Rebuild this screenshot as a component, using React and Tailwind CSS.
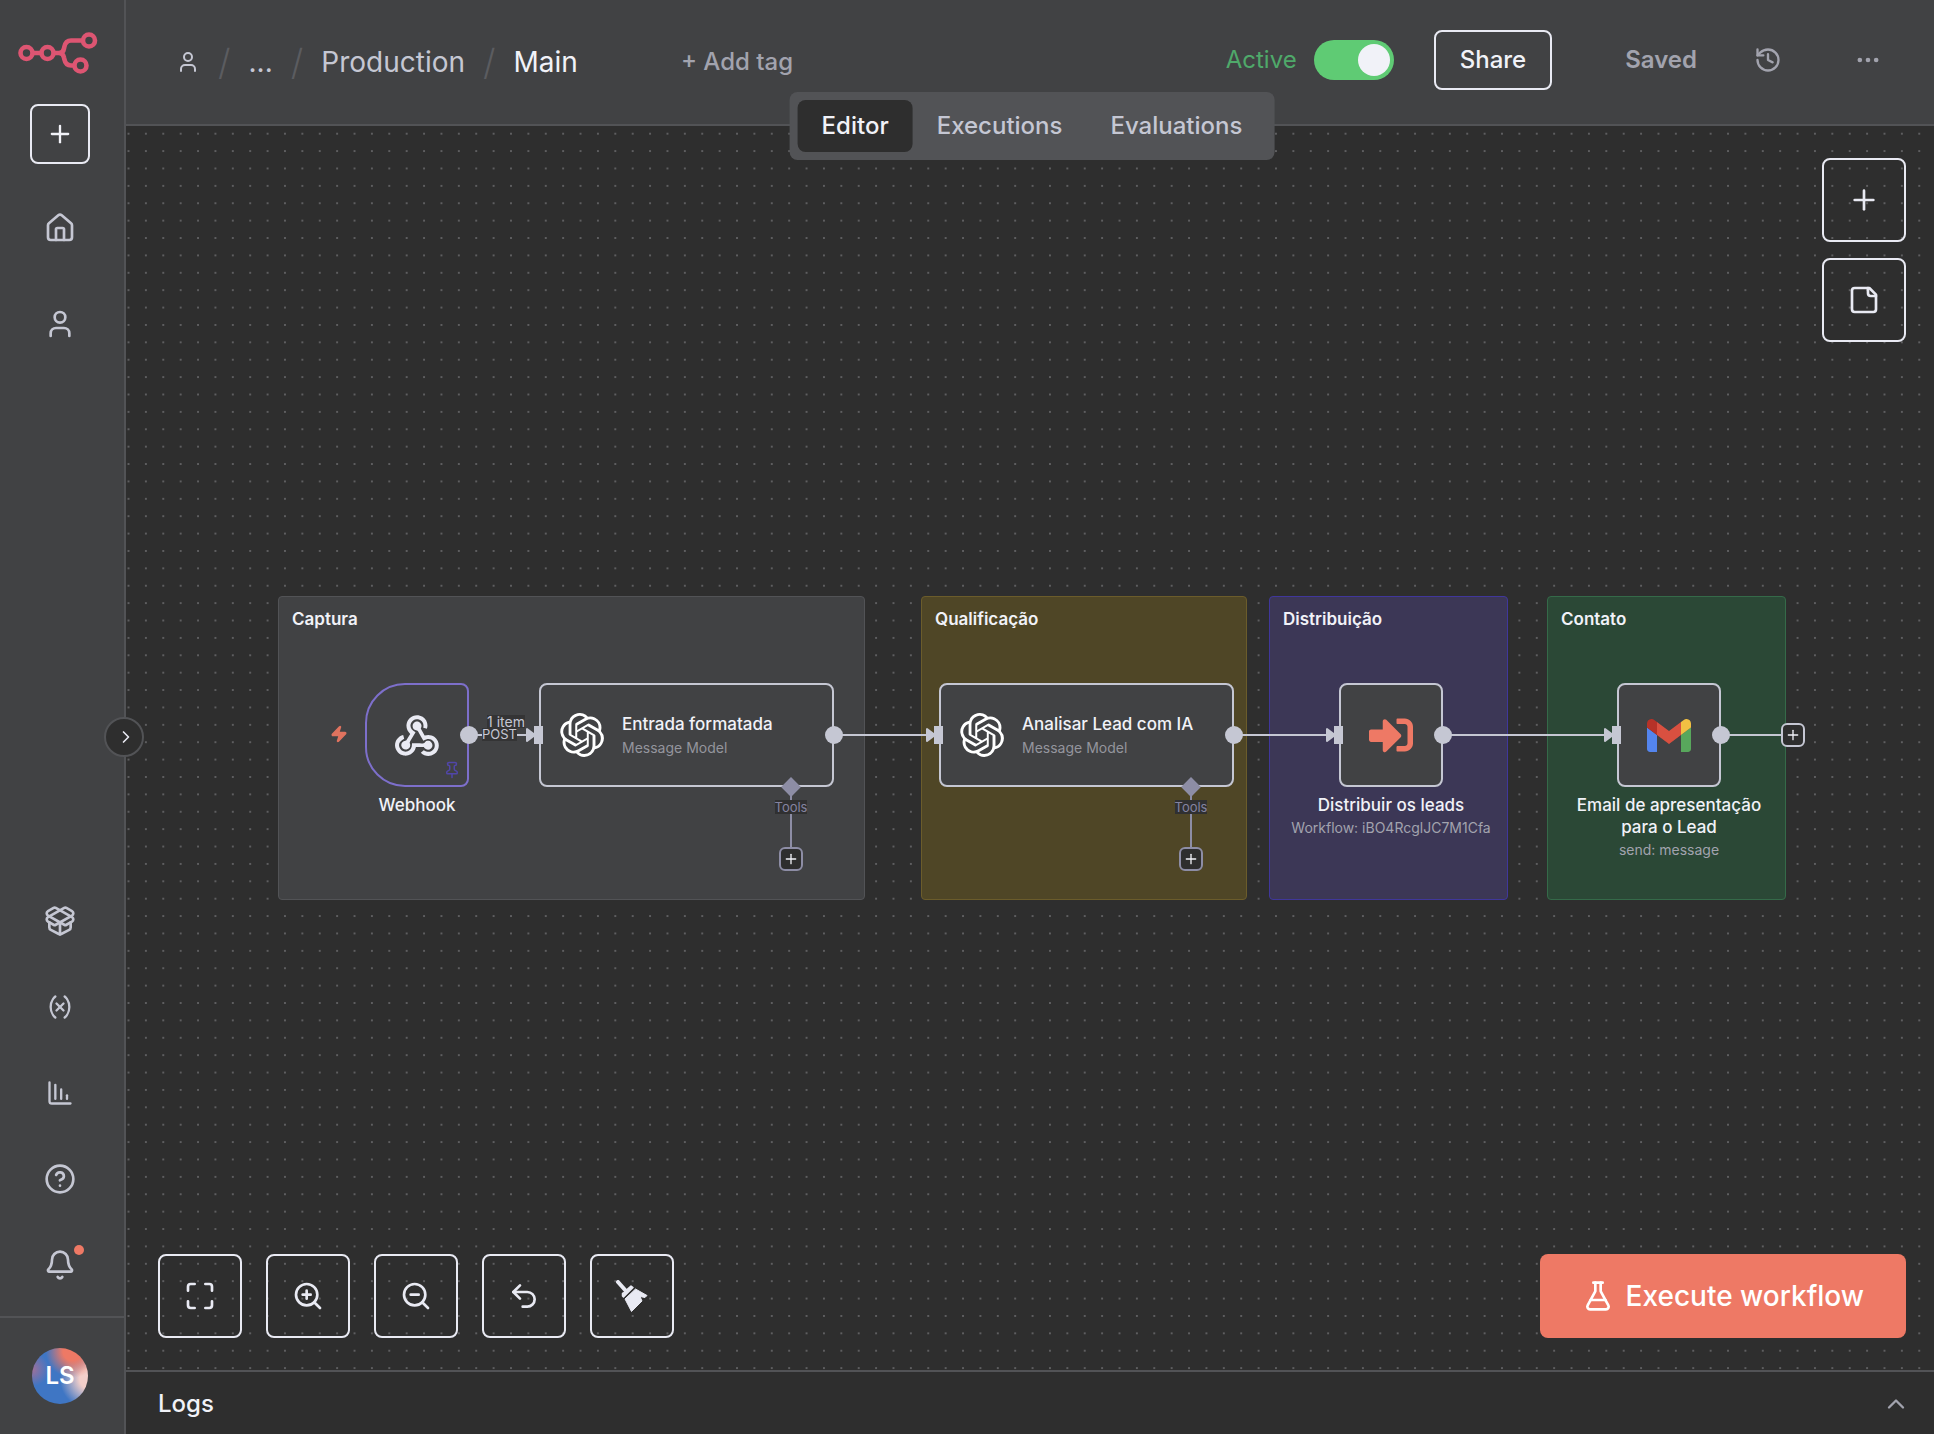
import { useState } from 'react'
import {
  Bell,
  ChartColumnDecreasing,
  ChevronRight,
  ChevronUp,
  CircleQuestionMark,
  Ellipsis,
  FlaskConical,
  History,
  House,
  Maximize,
  PackageOpen,
  Pin,
  Plus,
  Undo2,
  User,
  Variable,
  Zap,
  ZoomIn,
  ZoomOut,
} from 'lucide-react'
import { FaSignInAlt } from 'react-icons/fa'
import { SiOpenai } from 'react-icons/si'

const sidebarTop = [
  { label: 'Overview', icon: House },
  { label: 'Personal', icon: User },
]

const sidebarBottom = [
  { label: 'Templates', icon: PackageOpen, size: 32 },
  { label: 'Variables', icon: Variable, size: 28 },
  { label: 'Insights', icon: ChartColumnDecreasing, size: 28 },
  { label: 'Help', icon: CircleQuestionMark, size: 32 },
  { label: "What's new", icon: Bell, size: 32, dot: true },
]

const tabs = ['Editor', 'Executions', 'Evaluations']

// canvas coordinates, measured from the top left of the canvas
const stickies = [
  { title: 'Captura', className: 'left-[152px] w-[587px] border-[#525356] bg-[#414244]' },
  { title: 'Qualificação', className: 'left-[795px] w-[326px] border-[#6b5c2b] bg-[#4f4626]' },
  { title: 'Distribuição', className: 'left-[1143px] w-[239px] border-[#40379b] bg-[#3c3756]' },
  { title: 'Contato', className: 'left-[1421px] w-[239px] border-[#356a49] bg-[#2b4836]' },
]

const edges = [
  { from: 343, to: 408 },
  { from: 708, to: 808 },
  { from: 1108, to: 1208 },
  { from: 1317, to: 1486 },
]

function N8nLogo() {
  return (
    <svg width="80" height="42" viewBox="0 0 80 42" fill="none" stroke="#dd5572" strokeWidth="4.6" aria-hidden="true">
      <circle cx="8.5" cy="21" r="6" />
      <circle cx="29.5" cy="21" r="6" />
      <circle cx="71" cy="8.5" r="6" />
      <circle cx="62.5" cy="33.5" r="6" />
      <path d="M14.5 21h9M35.5 21H41c3 0 4.500-1.500 5-4.500l.3-1.500c.8-4 2.700-6.500 6.700-6.500h12M41 21c3 0 4.500 1.500 5 4.500l.3 1.500c.8 4 2.700 6.500 6.700 6.500h3.500" />
    </svg>
  )
}

function WebhookIcon() {
  return (
    <svg width="44" height="41" viewBox="0 0 256 239" fill="#e9eaf3" aria-hidden="true">
      <path d="M119.54 100.503c-10.61 17.836-20.775 35.108-31.152 52.25-2.665 4.401-3.984 7.986-1.855 13.58 5.878 15.454-2.414 30.493-17.998 34.575-14.697 3.851-29.016-5.808-31.932-21.543-2.584-13.927 8.224-27.58 23.58-29.757 1.286-.184 2.6-.205 4.762-.367l23.358-39.168C73.612 95.465 64.868 78.39 66.803 57.23c1.368-14.957 7.25-27.883 18-38.477 20.59-20.288 52.002-23.573 76.246-8.001 23.284 14.958 33.948 44.094 24.858 69.031-6.854-1.858-13.756-3.732-21.343-5.79 2.854-13.865.743-26.315-8.608-36.981-6.178-7.042-14.106-10.733-23.12-12.093-18.072-2.73-35.815 8.88-41.08 26.618-5.976 20.13 3.069 36.575 27.784 48.967z" />
      <path d="M149.841 79.41c7.475 13.187 15.065 26.573 22.587 39.836 38.02-11.763 66.686 9.284 76.97 31.817 12.422 27.219 3.93 59.457-20.465 76.25-25.04 17.238-56.707 14.293-78.892-7.851 5.654-4.733 11.336-9.487 17.407-14.566 21.912 14.192 41.077 13.524 55.305-3.282 12.133-14.337 11.87-35.714-.615-49.75-14.408-16.197-33.707-16.691-57.035-1.143-9.677-17.168-19.522-34.199-28.893-51.491-3.16-5.828-6.648-9.21-13.77-10.443-11.893-2.062-19.571-12.275-20.032-23.717-.453-11.316 6.214-21.545 16.634-25.53 10.322-3.949 22.435-.762 29.378 8.014 5.674 7.17 7.477 15.24 4.491 24.083-.83 2.466-1.905 4.852-3.07 7.774z" />
      <path d="M167.707 187.21h-45.77c-4.387 18.044-13.863 32.612-30.19 41.876-12.693 7.2-26.373 9.641-40.933 7.29-26.808-4.323-48.728-28.456-50.658-55.63-2.184-30.784 18.975-58.147 47.178-64.293 1.947 7.071 3.915 14.21 5.862 21.264-25.876 13.202-34.832 29.836-27.59 50.636 6.375 18.304 24.484 28.337 44.147 24.457 20.08-3.962 30.204-20.65 28.968-47.432 19.036 0 38.088-.197 57.126.097 7.434.117 13.173-.654 18.773-7.208 9.22-10.784 26.191-9.811 36.121.374 10.148 10.409 9.662 27.157-1.077 37.127-10.361 9.62-26.73 9.106-36.424-1.26-1.992-2.136-3.562-4.673-5.533-7.298z" />
    </svg>
  )
}

function GmailIcon() {
  return (
    <svg width="44" height="33" viewBox="52 42 88 66" aria-hidden="true">
      <path fill="#5485ee" d="M58 108h14V74L52 59v43c0 3.32 2.69 6 6 6" />
      <path fill="#58a75c" d="M120 108h14c3.32 0 6-2.69 6-6V59l-20 15" />
      <path fill="#f2c043" d="M120 48v26l20-15v-8c0-7.42-8.47-11.65-14.4-7.2" />
      <path fill="#d95040" d="M72 74V48l24 18 24-18v26L96 92" />
      <path fill="#b63228" d="M52 51v8l20 15V48l-5.6-4.2c-5.94-4.45-14.4-.22-14.4 7.2" />
    </svg>
  )
}

function NoteIcon() {
  return (
    <svg
      width="32"
      height="32"
      viewBox="0 0 24 24"
      fill="none"
      stroke="currentColor"
      strokeWidth="2"
      strokeLinecap="round"
      strokeLinejoin="round"
      aria-hidden="true"
    >
      <path d="M16 3H5a2 2 0 0 0-2 2v14a2 2 0 0 0 2 2h14a2 2 0 0 0 2-2V8Z" />
      <path d="M15 3v4a2 2 0 0 0 2 2h4" />
    </svg>
  )
}

function BroomIcon() {
  return (
    <svg width="32" height="32" viewBox="0 0 32 32" fill="currentColor" stroke="currentColor" aria-hidden="true">
      <path d="M2 2l8 9" strokeWidth="4" strokeLinecap="round" />
      <path d="M6.5 13.5L10 11.5l1-2L15 6l2 1.5L7.5 17l-1-1z" strokeWidth="1.5" strokeLinejoin="round" />
      <path d="M19.5 9L31 15.5l-2 2L24 16.5l2 4.5L15.5 31.5 9 19z" strokeWidth="1" strokeLinejoin="round" />
    </svg>
  )
}

function Sidebar() {
  return (
    <aside className="relative z-20 flex w-[126px] shrink-0 flex-col border-r-2 border-[#525356] bg-[#414244] text-[#c5c7d3]">
      <a href="#home" aria-label="n8n" className="ml-[18px] mt-8">
        <N8nLogo />
      </a>
      <button
        type="button"
        aria-label="Create"
        className="ml-[30px] mt-[30px] flex size-[60px] items-center justify-center rounded-lg border-2 border-[#e9eaf3] text-[#f1f2f8]"
      >
        <Plus size={28} />
      </button>

      <nav className="mt-12 flex flex-col gap-16 pl-11" aria-label="Projects">
        {sidebarTop.map(({ label, icon: Icon }) => (
          <a key={label} href={`#${label.toLowerCase()}`} aria-label={label}>
            <Icon size={32} />
          </a>
        ))}
      </nav>

      <nav className="mt-auto flex flex-col items-center pb-2 pr-1" aria-label="Resources">
        {sidebarBottom.map(({ label, icon: Icon, size, dot }) => (
          <a key={label} href={`#${label.toLowerCase()}`} aria-label={label} className="relative flex h-[86px] items-center">
            <Icon size={size} />
            {dot && <span className="absolute -right-2 top-[23px] size-[10px] rounded-full bg-[#ee7965]" />}
          </a>
        ))}
      </nav>

      <div className="flex h-[118px] items-center justify-center border-t-2 border-[#525356] pr-1">
        <button
          type="button"
          className="size-14 rounded-full bg-[#3f76c4] bg-[radial-gradient(circle_at_72%_6%,#ee7965_14%,transparent_40%),radial-gradient(circle_at_104%_55%,#f3cfca_16%,transparent_46%),radial-gradient(circle_at_0%_38%,#a0709a_0%,transparent_26%)] text-2xl font-semibold text-white"
        >
          LS
        </button>
      </div>

      <button
        type="button"
        aria-label="Expand sidebar"
        className="absolute -right-[20px] top-1/2 flex size-10 items-center justify-center rounded-full border-2 border-[#525356] bg-[#2e2e2e] pl-1 text-[#e9eaf3]"
      >
        <ChevronRight size={20} />
      </button>
    </aside>
  )
}

function Slash() {
  return (
    <span className="text-4xl font-light text-[#5b5c60]" aria-hidden="true">
      /
    </span>
  )
}

function Header() {
  const [active, setActive] = useState(true)
  const [tab, setTab] = useState('Editor')

  return (
    <header className="relative z-10 flex h-[126px] shrink-0 items-start justify-between border-b-2 border-[#525356] bg-[#414244] pl-[50px] pr-9 pt-[30px]">
      <div className="flex h-16 items-center">
        <nav className="flex items-center gap-[18px] text-[28px] text-[#c5c7d3]" aria-label="Breadcrumb">
          <a href="#personal" aria-label="Personal">
            <User size={24} />
          </a>
          <Slash />
          <button type="button">...</button>
          <Slash />
          <a href="#production">Production</a>
          <Slash />
          <h1 className="text-[#f1f2f8]">Main</h1>
        </nav>
        <button type="button" className="ml-[103px] text-2xl font-medium text-[#a2a3ae]">
          + Add tag
        </button>
      </div>

      <div className="flex h-[60px] items-center text-2xl font-medium text-[#a2a3ae]">
        <label htmlFor="active" className="font-normal text-[#4fa96a]">
          Active
        </label>
        <input
          id="active"
          type="checkbox"
          role="switch"
          checked={active}
          onChange={() => setActive(!active)}
          className="ml-[17px] h-10 w-20 appearance-none rounded-full bg-[#7d7d87] p-1 before:block before:size-8 before:rounded-full before:bg-[#f1f2f8] checked:bg-[#5fcb74] checked:before:ml-10"
        />
        <button type="button" className="ml-10 h-[60px] rounded-lg border-2 border-[#e9eaf3] px-6 text-[#f1f2f8]">
          Share
        </button>
        <span className="ml-[73px] font-semibold">Saved</span>
        <button type="button" aria-label="Workflow history" className="ml-[41px] flex size-[60px] items-center justify-center">
          <History size={28} />
        </button>
        <button type="button" aria-label="More" className="ml-10 flex size-[60px] items-center justify-center">
          <Ellipsis size={28} />
        </button>
      </div>

      <div
        role="tablist"
        className="absolute left-1/2 top-full ml-[2px] mt-[2px] flex -translate-x-1/2 -translate-y-1/2 rounded-lg bg-[#525356] p-2 text-2xl font-medium text-[#c5c7d3]"
      >
        {tabs.map((name) => (
          <button
            key={name}
            type="button"
            role="tab"
            aria-selected={tab === name}
            onClick={() => setTab(name)}
            className="h-[52px] rounded-lg px-6 aria-selected:bg-[#2e2e2e] aria-selected:text-[#f1f2f8]"
          >
            {name}
          </button>
        ))}
      </div>
    </header>
  )
}

function InputHandle() {
  return <span className="absolute -left-[7px] top-[41px] h-[18px] w-[9px] bg-[#c5c7d3]" />
}

function OutputHandle() {
  return <span className="absolute -right-[11px] top-[41px] size-[18px] rounded-full bg-[#c5c7d3]" />
}

function CanvasPlus({ className }) {
  return (
    <button
      type="button"
      aria-label="Add node"
      className={`flex size-6 items-center justify-center rounded-md border-2 bg-[#2e2e2e] text-[#f1f2f8] ${className}`}
    >
      <Plus size={16} strokeWidth={2} />
    </button>
  )
}

// wide node with an icon, two lines of text and a tools connector
function AgentNode({ title, className }) {
  return (
    <div
      className={`absolute top-[557px] flex h-[104px] w-[295px] items-center rounded-lg border-2 border-[#c5c7d3] bg-[#414244] pl-[19px] ${className}`}
    >
      <SiOpenai size={44} color="#ffffff" className="shrink-0" />
      <div className="ml-[18px] pt-[2px]">
        <p className="text-[17px] font-medium leading-6 text-[#f1f2f8]">{title}</p>
        <p className="text-sm leading-6 text-[#94959d]">Message Model</p>
      </div>
      <InputHandle />
      <OutputHandle />
      <div className="absolute left-[232px] top-[95px] flex w-9 flex-col items-center">
        <span className="size-[14px] rotate-45 bg-[#8d8da5]" />
        <span className="h-[53px] w-[2px] bg-[#8d8da5]" />
        <CanvasPlus className="border-[#8d8da5]" />
        <span className="absolute top-[20px] bg-[#303031] text-[13px] leading-[14px] text-[#8583a0]">Tools</span>
      </div>
    </div>
  )
}

function SquareNode({ title, subtitle, input, output, frame, className, children }) {
  return (
    <div className={`absolute top-[557px] flex w-[200px] flex-col items-center text-center ${className}`}>
      <div className={`relative flex size-[104px] items-center justify-center border-2 bg-[#414244] ${frame}`}>
        {children}
        {input && <InputHandle />}
        {output && <OutputHandle />}
      </div>
      <p className="mt-[7px] text-[17px] font-medium leading-[22px] text-[#f1f2f8]">{title}</p>
      {subtitle && <p className="whitespace-nowrap text-sm leading-6 text-[#a2a3ae]">{subtitle}</p>}
    </div>
  )
}

function Edges() {
  return (
    <svg className="absolute left-0 top-0 size-full" fill="none" stroke="#c5c7d3" strokeWidth="2" aria-hidden="true">
      {edges.map(({ from, to }) => (
        <g key={from}>
          <path d={`M${from} 609H${to - 6}`} />
          <path d={`M${to - 7} 603v12l8-6z`} fill="#c5c7d3" strokeLinejoin="round" />
        </g>
      ))}
      <path d="M1595 609h60" />
    </svg>
  )
}

const toolButton =
  'flex size-[84px] items-center justify-center rounded-lg border-2 border-[#e9eaf3] text-[#e9eaf3]'

function Canvas() {
  return (
    <section className="relative flex-1 overflow-hidden bg-[#2e2e2e]" aria-label="Workflow canvas">
      <svg className="absolute left-0 top-0 size-full" aria-hidden="true">
        <defs>
          <pattern id="dots" x="-6.19" y="-0.99" width="17.386" height="17.386" patternUnits="userSpaceOnUse">
            <circle cx="8.693" cy="8.693" r="0.65" fill="#b4b4ba" />
          </pattern>
        </defs>
        <rect width="100%" height="100%" fill="url(#dots)" />
      </svg>

      {stickies.map(({ title, className }) => (
        <section key={title} className={`absolute top-[470px] h-[304px] rounded border px-[13px] py-[10px] ${className}`}>
          <h2 className="text-[17px] font-semibold leading-6 text-[#f1f2f8]">{title}</h2>
        </section>
      ))}

      <Edges />

      <Zap className="absolute left-[204px] top-[599px]" size={18} fill="#e0735f" color="#e0735f" />
      <SquareNode
        title="Webhook"
        output
        frame="rounded-l-[40px] rounded-r-lg border-[#7d6fcb]"
        className="left-[191px]"
      >
        <WebhookIcon />
        <Pin className="absolute bottom-[6px] right-[6px]" size={18} color="#5146a8" />
      </SquareNode>
      <AgentNode title="Entrada formatada" className="left-[413px]" />
      <AgentNode title="Analisar Lead com IA" className="left-[813px]" />
      <SquareNode
        title="Distribuir os leads"
        subtitle="Workflow: iBO4RcglJC7M1Cfa"
        input
        output
        frame="rounded-lg border-[#c5c7d3]"
        className="left-[1165px]"
      >
        <FaSignInAlt size={44} color="#ee7965" />
      </SquareNode>
      <SquareNode
        title="Email de apresentação para o Lead"
        subtitle="send: message"
        input
        output
        frame="rounded-lg border-[#c5c7d3]"
        className="left-[1443px]"
      >
        <GmailIcon />
      </SquareNode>
      <CanvasPlus className="absolute left-[1655px] top-[597px] border-[#c5c7d3]" />

      <span className="absolute left-[361px] top-[589px] bg-[#343435] text-sm leading-[13px] text-[#c5c7d3]">1 item</span>
      <span className="absolute left-[356px] top-[602px] bg-[#343435] text-[13px] leading-[13px] text-[#c5c7d3]">POST</span>

      <div className="absolute right-7 top-8 flex flex-col gap-4">
        <button type="button" aria-label="Add node" className={toolButton}>
          <Plus size={32} />
        </button>
        <button type="button" aria-label="Add sticky note" className={toolButton}>
          <NoteIcon />
        </button>
      </div>

      <div className="absolute inset-x-0 bottom-8 flex items-center justify-between pl-8 pr-7">
        <div className="flex gap-6">
          <button type="button" aria-label="Zoom to fit" className={toolButton}>
            <Maximize size={32} />
          </button>
          <button type="button" aria-label="Zoom in" className={toolButton}>
            <ZoomIn size={32} />
          </button>
          <button type="button" aria-label="Zoom out" className={toolButton}>
            <ZoomOut size={32} />
          </button>
          <button type="button" aria-label="Undo" className={toolButton}>
            <Undo2 size={32} />
          </button>
          <button type="button" aria-label="Tidy up" className={toolButton}>
            <BroomIcon />
          </button>
        </div>
        <button
          type="button"
          className="flex h-[84px] items-center gap-3 rounded-lg bg-[#ee7965] px-[42px] text-[28px] font-medium text-white"
        >
          <FlaskConical size={32} />
          Execute workflow
        </button>
      </div>
    </section>
  )
}

export default function App() {
  return (
    <div className="flex h-screen bg-[#2e2e2e] font-['Inter',sans-serif]">
      <Sidebar />
      <main className="flex min-w-0 flex-1 flex-col">
        <Header />
        <Canvas />
        <footer className="flex h-16 shrink-0 items-center justify-between border-t-2 border-[#525356] pl-8 pr-6 pt-[2px]">
          <h2 className="text-2xl font-medium text-[#f1f2f8]">Logs</h2>
          <button type="button" aria-label="Open logs" className="text-[#a2a3ae]">
            <ChevronUp size={28} />
          </button>
        </footer>
      </main>
    </div>
  )
}
